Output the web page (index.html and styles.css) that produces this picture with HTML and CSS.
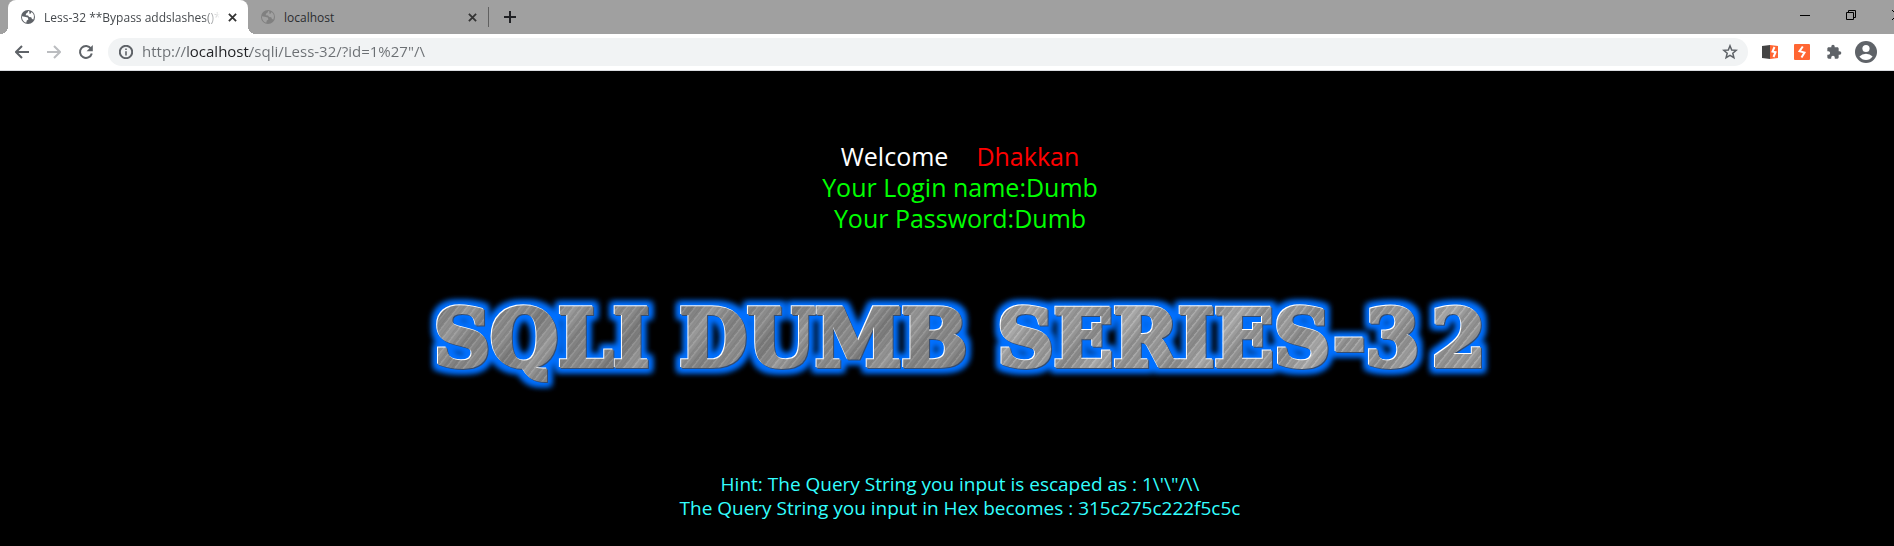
FILE: index.html
```html
<!DOCTYPE html>
<html lang="en">
<head>
<meta charset="utf-8">
<title>Less-32 **Bypass addslashes()**</title>
<link rel="stylesheet" href="styles.css">
</head>
<body>
<svg class="defs" width="0" height="0" aria-hidden="true">
  <symbol id="globe" viewBox="0 0 16 16">
    <circle cx="8" cy="8" r="7"/>
    <path class="land" d="M1.8 7.2 4.6 7.8 7.8 8.6 8.4 10.6 6.8 11.4 6.2 13.8Q2.2 12.4 1.8 7.2ZM8.2 2Q8 3.8 6.4 4.2L5.6 6.2 8 6.4 9.2 8 11.2 8.2 12 10 13.4 10.6Q15.2 5.6 11.6 3Q10.8 5 9.6 5L9.2 2.2Z"/>
  </symbol>
  <symbol id="cross" viewBox="0 0 10 10"><path d="M1 1 9 9M9 1 1 9"/></symbol>
  <filter id="neon" x="-3%" y="-30%" width="106%" height="160%" color-interpolation-filters="sRGB">
    <feMorphology in="SourceAlpha" operator="dilate" radius="4" result="wide"/>
    <feGaussianBlur in="wide" stdDeviation="3" result="soft"/>
    <feFlood flood-color="#0070ff"/>
    <feComposite in2="soft" operator="in" result="glow"/>
    <feOffset in="SourceAlpha" dx="-1" dy="-1" result="upper"/>
    <feFlood flood-color="#ffffff"/>
    <feComposite in2="upper" operator="in" result="light"/>
    <feOffset in="SourceAlpha" dx="1" dy="1" result="lower"/>
    <feFlood flood-color="#344c70"/>
    <feComposite in2="lower" operator="in" result="shade"/>
    <feMerge>
      <feMergeNode in="glow"/><feMergeNode in="glow"/><feMergeNode in="shade"/><feMergeNode in="light"/><feMergeNode in="SourceGraphic"/>
    </feMerge>
  </filter>
</svg>

<header>
  <div class="tabs">
    <div class="tab active">
      <svg class="favicon"><use href="#globe"/></svg>
      <span class="tab-title">Less-32 **Bypass addslashes()**</span>
      <button class="close" aria-label="Close tab"><svg><use href="#cross"/></svg></button>
    </div>
    <div class="tab">
      <svg class="favicon"><use href="#globe"/></svg>
      <span class="tab-title">localhost</span>
      <button class="close" aria-label="Close tab"><svg><use href="#cross"/></svg></button>
    </div>
    <button class="new-tab" aria-label="New tab"><svg width="12" height="12" viewBox="0 0 12 12"><path d="M6 0V12M0 6H12"/></svg></button>
    <div class="window-controls">
      <button aria-label="Minimize"><svg width="10" height="10" viewBox="0 0 10 10"><path d="M0 5.500H10"/></svg></button>
      <button aria-label="Restore"><svg width="10" height="10" viewBox="0 0 10 10"><path d="M.5 2.500H7.500V9.500H.5ZM2.500 2.500V.5H9.500V7.500H7.500"/></svg></button>
      <button aria-label="Close"><svg width="10" height="10" viewBox="0 0 10 10"><path d="M0 0 10 10M10 0 0 10"/></svg></button>
    </div>
  </div>

  <div class="toolbar">
    <button aria-label="Back"><svg width="14" height="14" viewBox="0 0 14 14"><path class="line" d="M14 7H1.500M7 1 1 7 7 13"/></svg></button>
    <button class="faded" aria-label="Forward"><svg width="14" height="14" viewBox="0 0 14 14"><path class="line" d="M0 7H12.500M7 1 13 7 7 13"/></svg></button>
    <button aria-label="Reload"><svg width="16" height="16" viewBox="0 0 16 16"><path class="line" d="M13 4.600A6 6 0 1 0 13.800 9.500"/><path d="M14.800 1V7.200H8.600Z"/></svg></button>
    <div class="omnibox">
      <svg width="14" height="14" viewBox="0 0 14 14"><circle class="ring" cx="7" cy="7" r="6.200"/><path d="M6.200 6.200H7.800V10.500H6.200ZM6.200 3.500H7.800V5H6.200Z"/></svg>
      <input class="url" type="text" aria-label="Address" value="http://localhost/sqli/Less-32/?id=1%27&quot;/\">
      <button aria-label="Bookmark"><svg width="16" height="16" viewBox="0 0 16 16"><path class="star" d="M8 1.800 9.700 6 14.200 6.300 10.800 9.200 11.900 13.700 8 11.300 4.100 13.700 5.200 9.200 1.800 6.300 6.300 6Z"/></svg></button>
    </div>
    <div class="extensions">
      <button aria-label="Extension"><svg width="16" height="16" viewBox="0 0 16 16"><path fill="#444" d="M0 2 8 1V15L0 14Z"/><path fill="#ff6633" d="M8 1 16 2V14L8 15Z"/><path class="bolt" d="M12.500 3 10.500 7.500 13.500 8.200 11.500 13"/></svg></button>
      <button aria-label="Proxy extension"><svg width="16" height="16" viewBox="0 0 16 16"><rect width="16" height="16" rx="1" fill="#ff6633"/><path class="bolt" d="M8.800 2.500 5.500 7.200 10.500 8.600 7.500 13.500"/></svg></button>
      <button aria-label="Extensions"><svg width="16" height="16" viewBox="0 0 24 24"><path d="M20.500 11H19V7c0-1.100-.9-2-2-2h-4V3.500a2.500 2.500 0 0 0-5 0V5H4c-1.100 0-2 .9-2 2v3.800h1.500a2.700 2.700 0 0 1 0 5.400H2V20c0 1.100.9 2 2 2h3.800v-1.500a2.700 2.700 0 0 1 5.400 0V22H17c1.100 0 2-.9 2-2v-4h1.500a2.500 2.500 0 0 0 0-5z"/></svg></button>
      <button aria-label="Profile"><svg width="22" height="22" viewBox="0 0 22 22"><circle cx="11" cy="11" r="11"/><circle fill="#fff" cx="11" cy="7.500" r="3.600"/><path fill="#fff" d="M4.400 15.500Q7 12.800 11 12.800T17.600 15.500Q15 19 11 19T4.400 15.500Z"/></svg></button>
      <button aria-label="Menu"><svg width="4" height="16" viewBox="0 0 4 16"><circle cx="2" cy="2" r="2"/><circle cx="2" cy="8" r="2"/><circle cx="2" cy="14" r="2"/></svg></button>
    </div>
  </div>
</header>

<main>
  <section class="greeting">
    <p class="welcome"><span>Welcome</span><span class="name">Dhakkan</span></p>
    <p>Your Login name:Dumb</p>
    <p>Your Password:Dumb</p>
  </section>
  <h1 class="banner"><span>SQLI</span><span>DUMB</span><span>SERIES-3<b>2</b></span></h1>
  <section class="hint">
    <p>Hint: The Query String you input is escaped as : 1\'\"/\\</p>
    <p>The Query String you input in Hex becomes : 315c275c222f5c5c</p>
  </section>
</main>
</body>
</html>
```
FILE: styles.css
```css
* { box-sizing: border-box; }

html { overflow: hidden; background: #000; }

body {
  margin: 0;
  /* the window reaches past the right edge of the view */
  width: calc(100% + 26px);
  font-family: "Open Sans", "Noto Sans", sans-serif;
}

.defs { position: absolute; }

button {
  display: flex;
  align-items: center;
  justify-content: center;
  padding: 0;
  border: 0;
  background: none;
  color: #5f6368;
  fill: currentColor;
}

/* Tab strip */
.tabs {
  display: flex;
  height: 34px;
  padding-left: 8px;
  background: #a0a0a0;
}

.tab {
  position: relative;
  display: flex;
  align-items: center;
  width: 240px;
  padding: 0 8px 0 12px;
  font-size: 12px;
  color: #2b2d30;
}

.tab.active { background: #fff; border-radius: 8px 8px 0 0; color: #45494d; }

.tab.active::before,
.tab.active::after {
  content: "";
  position: absolute;
  bottom: 0;
  width: 8px;
  height: 8px;
}

.tab.active::before { right: 100%; background: radial-gradient(circle at 0 0, #a0a0a0 8px, #fff 8px); }
.tab.active::after { left: 100%; background: radial-gradient(circle at 100% 0, #a0a0a0 8px, #fff 8px); }

.favicon { flex: none; width: 16px; height: 16px; margin-right: 8px; fill: #808080; --land: #a0a0a0; }
.active .favicon { fill: #5f6368; --land: #fff; }
.land { fill: var(--land); }

.tab-title {
  flex: 1;
  overflow: hidden;
  white-space: nowrap;
}

.active .tab-title { mask-image: linear-gradient(90deg, #000 90%, transparent); }

.close { width: 16px; height: 16px; margin-left: 4px; color: #333; }
.close svg { width: 9px; height: 9px; }
.close svg, .new-tab svg { stroke: currentColor; stroke-width: 2; }

.new-tab { align-self: center; width: 42px; height: 20px; border-left: 1px solid #606060; color: #202124; }

.window-controls { display: flex; margin-left: auto; height: 29px; }
.window-controls button { width: 46px; color: #000; }
.window-controls svg { fill: none; stroke: currentColor; }

/* Toolbar */
.toolbar {
  display: flex;
  align-items: center;
  height: 37px;
  padding: 0 6px;
  background: #fff;
  border-bottom: 1px solid #dadce0;
}

.toolbar > button { width: 32px; height: 28px; }
.toolbar .faded { color: #bbbdc0; }
.line { fill: none; stroke: currentColor; stroke-width: 2; }

.omnibox {
  flex: 1;
  display: flex;
  align-items: center;
  gap: 9px;
  height: 28px;
  margin-left: 6px;
  padding: 0 10px 0 11px;
  border-radius: 14px;
  background: #f1f3f4;
  fill: #5f6368;
}

.ring { fill: none; stroke: #5f6368; stroke-width: 2; }
.star { fill: none; stroke: #5f6368; stroke-width: 1.5; }

.url {
  flex: 1;
  height: 28px;
  padding: 0 0 2px;
  border: 0;
  font: 15px "Open Sans", "Noto Sans", sans-serif;
  color: transparent;
  caret-color: #202124;
  /* the host name is darker than the rest of the address */
  background: linear-gradient(90deg, #6b6f73 46px, #202124 46px 108px, #6b6f73 108px);
  background-clip: text;
}

.extensions { display: flex; margin-left: 6px; }
.extensions button { width: 32px; height: 28px; }
.bolt { fill: none; stroke: #fff; stroke-width: 2; }

/* Page */
main { padding: 70px 0 24px; text-align: center; }
p { margin: 0; }

.greeting { font-size: 25px; line-height: 31px; color: #00ff00; }
.welcome { display: flex; justify-content: center; gap: 28px; color: #fff; }
.name { color: #ff0000; }

.banner {
  display: flex;
  justify-content: center;
  gap: 26px;
  margin: 60px 0 88px;
  font: bold 78px/90px "DejaVu Serif", serif;
  filter: url(#neon);
}

.banner span {
  padding: 0 2px;
  color: transparent;
  -webkit-text-stroke: 4px transparent;
  background:
    repeating-linear-gradient(128deg, #fff2 0 1px, #0000 2px 4px, #0001 5px, #0000 7px),
    repeating-linear-gradient(128deg, #8c8c8c 0, #787878 17px, #989898 38px, #808080 57px, #8c8c8c 83px);
  background-clip: text;
}

.banner span:last-child {
  background:
    repeating-linear-gradient(128deg, #fff3 0 1px, #0000 2px 4px, #0001 5px, #0000 7px),
    repeating-linear-gradient(128deg, #999 0, #868686 17px, #a8a8a8 38px, #8e8e8e 57px, #999 83px);
  background-clip: text;
}

.banner b { margin-left: 12px; }

.hint { font-size: 19px; line-height: 24px; color: #33ffff; }
```
